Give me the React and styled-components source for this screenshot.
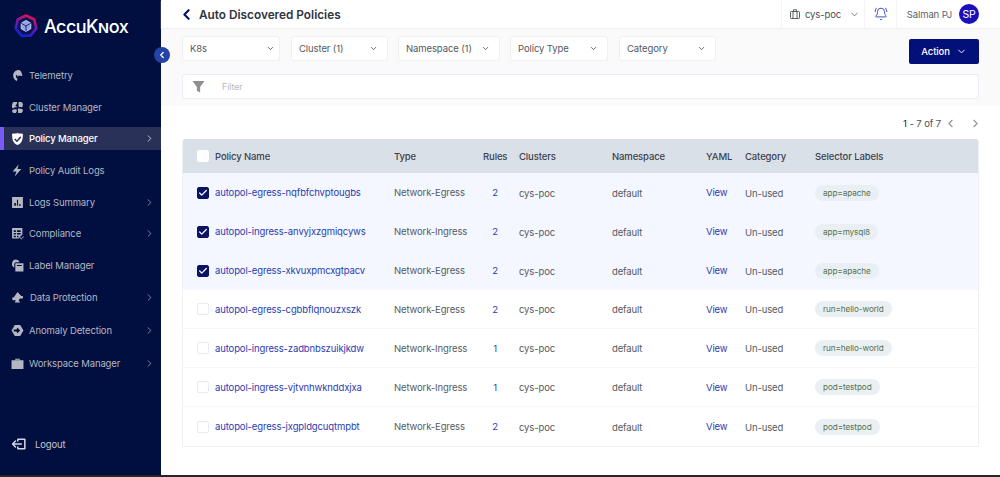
import React from 'react';
import styled, { createGlobalStyle } from 'styled-components';
import { ChevronDown, ChevronLeft, ChevronRight, Check, BellRing } from 'lucide-react';

const GlobalStyle = createGlobalStyle`
  html, body {
    margin: 0;
    padding: 0;
    height: 477px;
    overflow: hidden;
    background: #fff;
    font-family: Inter, "Liberation Sans", sans-serif;
  }
  * { box-sizing: border-box; }
`;

const Page = styled.div`
  display: grid;
  grid-template-rows: 475px 2px;
  width: 1000px;
  height: 477px;
`;

const Strip = styled.div`
  background: #26262b;
`;

const Shell = styled.div`
  display: grid;
  grid-template-columns: 161px 1fr;
  position: relative;
  min-height: 0;
`;

const Sidebar = styled.aside`
  display: flex;
  flex-direction: column;
  background: #010f40;
  color: #b9bcc8;
  padding-bottom: 25px;
`;

const Logo = styled.div`
  display: flex;
  align-items: center;
  gap: 6px;
  height: 59.5px;
  padding: 0 0 7px 14px;
`;

const LogoText = styled.span`
  color: #fff;
  font-size: 18px;
  font-weight: 500;
  font-variant: small-caps;
  letter-spacing: -0.55px;
`;

const Nav = styled.nav`
  display: flex;
  flex-direction: column;
`;

const NavItem = styled.div`
  display: flex;
  align-items: center;
  height: 23px;
  margin: ${p => (p.$tall ? '5px' : '4.35px')} 0;
  padding: 0 6px 0 ${p => (p.$active ? '7px' : '11px')};
  border-left: ${p => (p.$active ? '4px solid #7a5cf5' : 'none')};
  background: ${p => (p.$active ? '#2a3159' : 'transparent')};
  color: ${p => (p.$active ? '#fff' : '#b4b7c2')};
  font-size: 9.5px;
  letter-spacing: -0.12px;
  font-weight: ${p => (p.$active ? 500 : 400)};
`;

const NavIcon = styled.svg`
  width: 13px;
  height: 13px;
  margin-right: 5px;
  flex: none;
  fill: ${p => (p.$active ? '#fff' : '#b4b7c2')};
`;

const NavLabel = styled.span`
  flex: 1;
  padding-left: ${p => (p.$shift ? '1px' : '0')};
`;

const Logout = styled.div`
  display: flex;
  align-items: center;
  gap: 9px;
  margin-top: auto;
  padding-left: 12px;
  font-size: 9.5px;
  letter-spacing: -0.12px;
  color: #c3c6d0;
`;

const Collapse = styled.button`
  position: absolute;
  left: 154px;
  top: 47px;
  width: 16px;
  height: 16px;
  border: 0;
  border-radius: 50%;
  padding: 0;
  display: flex;
  align-items: center;
  justify-content: center;
  background: #2443a6;
  color: #fff;
`;

const Main = styled.main`
  display: flex;
  flex-direction: column;
  min-width: 0;
`;

const Header = styled.header`
  display: flex;
  align-items: stretch;
  height: 28px;
  padding: 0 21px;
  box-shadow: 0 1px 1px #f0f0f0;
  position: relative;
`;

const Back = styled.span`
  display: flex;
  align-items: center;
  color: #0a1466;
  margin-left: -4px;
  width: 21px;
`;

const Title = styled.h1`
  flex: 1;
  margin: 1px 0 0;
  align-self: center;
  font-size: 11.8px;
  font-weight: 600;
  color: #2f3440;
`;

const WorkspaceCell = styled.div`
  display: flex;
  align-items: center;
  width: 83px;
  padding-left: 8px;
  border-left: 1px solid #f4f4f4;
  font-size: 9.5px;
  letter-spacing: -0.12px;
  color: #4b4f58;
`;

const WorkspaceName = styled.span`
  margin: 0 8px 0 5px;
`;

const BellCell = styled.div`
  display: flex;
  align-items: center;
  justify-content: center;
  width: 33px;
  border-left: 1px solid #f4f4f4;
  border-right: 1px solid #f4f4f4;
  color: #2a3cb0;
`;

const UserBox = styled.div`
  display: flex;
  align-items: center;
  justify-content: flex-end;
  gap: 7px;
  width: 82px;
  font-size: 9.5px;
  letter-spacing: -0.12px;
  color: #5b5f68;
`;

const Avatar = styled.span`
  display: flex;
  align-items: center;
  justify-content: center;
  width: 20px;
  height: 20px;
  border-radius: 50%;
  background: #1a0fb8;
  color: #fff;
  font-size: 10.5px;
`;

const FilterPanel = styled.section`
  display: flex;
  flex-direction: column;
  gap: 10px;
  height: 78px;
  padding: 8px 21px 0;
  background: #fafafa;
`;

const FilterRow = styled.div`
  display: flex;
  align-items: flex-start;
`;

const Select = styled.div`
  display: flex;
  align-items: center;
  justify-content: space-between;
  width: ${p => p.$width}px;
  height: 25px;
  margin-right: ${p => p.$gap}px;
  padding: 0 ${p => p.$pad}px 0 7px;
  background: #fff;
  border: 1px solid #f0f0f4;
  border-radius: 3px;
  font-size: 9.5px;
  letter-spacing: -0.1px;
  color: #55585f;
`;

const ActionButton = styled.button`
  display: flex;
  align-items: center;
  justify-content: center;
  gap: 6px;
  width: 70px;
  height: 25px;
  margin: 3px 0 0 auto;
  border: 0;
  border-radius: 2px;
  background: #04107a;
  color: #fff;
  font-family: inherit;
  font-size: 9.5px;
  letter-spacing: -0.1px;
  font-weight: 500;
`;

const FilterBar = styled.div`
  display: flex;
  align-items: center;
  height: 25px;
  padding-left: 9px;
  background: #fff;
  border: 1px solid #ececf8;
  border-radius: 3px;
  font-size: 8.7px;
  color: #b5b9c4;
`;

const FilterIcon = styled.svg`
  width: 13px;
  height: 13px;
  fill: #8f8f8f;
  margin-right: 17px;
`;

const Pager = styled.div`
  display: flex;
  align-items: center;
  justify-content: flex-end;
  height: 33px;
  padding: 2px 18px 0 0;
  font-size: 9.5px;
  letter-spacing: -0.1px;
  color: #4b4f58;
`;

const PagerFirst = styled.span`
  color: #0a1466;
`;

const PagerButton = styled.span`
  display: flex;
  color: #8f939b;
  margin-left: ${p => p.$gap}px;
`;

const Table = styled.div`
  margin: 0 21px 0;
  border: 1px solid #eef0f3;
  border-top: 0;
  border-radius: 3px 3px 0 0;
  overflow: hidden;
`;

const columns = '32px 179px 89px 36px 93px 94px 39px 70px 1fr';

const HeadRow = styled.div`
  display: grid;
  grid-template-columns: ${columns};
  align-items: center;
  height: 34px;
  background: #dae0e7;
  font-size: 9.5px;
  letter-spacing: -0.12px;
  font-weight: 500;
  color: #3d424d;
`;

const Row = styled.div`
  display: grid;
  grid-template-columns: ${columns};
  align-items: center;
  height: 39px;
  background: ${p => (p.$selected ? '#f4f7ff' : '#fff')};
  border-bottom: ${p => (p.$selected || p.$last ? '0' : '1px solid #f7f7f9')};
  font-size: 9.5px;
  letter-spacing: -0.13px;
  color: #565a62;
`;

const Cell = styled.div`
  white-space: nowrap;
  margin-top: ${p => (p.$low ? '1px' : '0')};
`;

const BoxCell = styled.div`
  display: flex;
  justify-content: flex-end;
  padding-right: 6px;
`;

const CheckBox = styled.span`
  display: flex;
  align-items: center;
  justify-content: center;
  width: 12px;
  height: 12px;
  border-radius: 2px;
  color: #fff;
  background: ${p => (p.$checked ? '#0a1466' : '#fff')};
  border: 1px solid ${p => (p.$checked ? '#0a1466' : p.$plain ? '#fff' : '#e8eaf6')};
`;

const PolicyLink = styled.a`
  color: #2a3cb0;
`;

const RuleCount = styled.div`
  width: 24px;
  text-align: center;
  color: #2a3cb0;
`;

const ViewLink = styled.a`
  color: #2a3cb0;
`;

const Pill = styled.span`
  display: inline-flex;
  align-items: center;
  height: 16px;
  padding: 0 8px;
  border-radius: 8px;
  background: #e9eff3;
  color: #56724f;
  font-size: 8.2px;
  letter-spacing: -0.1px;
`;

const Svg = ({ children, active }) => (
  <NavIcon viewBox="0 0 24 24" $active={active}>{children}</NavIcon>
);

const icons = {
  telemetry: <path d="M14 2c-5 0-10 4-10 10 0 5 3 9 7 10l1-4c-2-1-3-3-3-5 0-1 1-2 2-2l1 3c1 0 2-1 2-2l6 1c1-1 1-3 0-4 0-3-3-7-6-7z" />,
  cluster: <path d="M5 2h6c1 3-1 5-3 6 1 1 3 2 3 4-3-1-5 0-7 2-2-1-3-3-2-6 0-3 1-5 3-6zm9 0h5c2 1 3 3 3 5 0 2-1 4-2 5-2-1-4-1-6 0 1-3-1-7 0-10zM2 17c3-2 6-2 9-1 0 2-1 4-2 6H5c-2 0-3-3-3-5zm11-3c3 0 6 0 9 2 0 3-1 6-4 6h-5c1-2-1-6 0-8z" />,
  shield: <path fillRule="evenodd" d="M2 3c7 0 10 0 10-2 0 2 3 2 10 2 0 10-1 17-10 21C3 20 2 13 2 3zm15 5l-6 7-3-3-2 2 5 5 8-9z" />,
  bolt: <path d="M14 1L3 14h7l-3 9 12-14h-7z" />,
  chart: <path fillRule="evenodd" d="M2 2h20v20H2zm4 11v5h3v-5zm5-6v11h2V7zm4 8v3h3v-3z" />,
  compliance: <path fillRule="evenodd" d="M2 2h19v12l-7 7H2zm3 4v3h4V6zm6 0v3h7V6zM5 11v3h4v-3zm6 0v3h7v-3zM5 16v3h4v-3zm6 0v3h3v-3zm12 1l1 1-5 5-3-3 1-1 2 2z" />,
  label: <path fillRule="evenodd" d="M9 1a8 8 0 0 1 7 5H9a3 3 0 0 0-3 3v7a8 8 0 0 1 3-15zm-1 7h15v15H8zm3 3v2h9v-2z" />,
  data: <path d="M12 2l7 7h3v5H17l-3 3 3 4H7l2-4H3l-1-5h3z" />,
  anomaly: <path fillRule="evenodd" d="M7 2h10l6 10-6 10H7L1 12zm5 5l-2 3H5v4h5l2 3 5-5z" />,
  work: <path d="M8 6V3h8v3h7v16H1V6zm2 0h4V5h-4z" />
};

const items = [
  { label: 'Telemetry', icon: 'telemetry' },
  { label: 'Cluster Manager', icon: 'cluster' },
  { label: 'Policy Manager', icon: 'shield', active: true, more: true },
  { label: 'Policy Audit Logs', icon: 'bolt' },
  { label: 'Logs Summary', icon: 'chart', more: true },
  { label: 'Compliance', icon: 'compliance', more: true },
  { label: 'Label Manager', icon: 'label' },
  { label: 'Data Protection', icon: 'data', more: true, tall: true, shift: true },
  { label: 'Anomaly Detection', icon: 'anomaly', more: true, tall: true },
  { label: 'Workspace Manager', icon: 'work', more: true }
];

const filters = [
  { label: 'K8s', width: 98, gap: 11, pad: 4 },
  { label: 'Cluster (1)', width: 97, gap: 10, pad: 9 },
  { label: 'Namespace (1)', width: 102, gap: 10, pad: 9 },
  { label: 'Policy Type', width: 98, gap: 11, pad: 9 },
  { label: 'Category', width: 97, gap: 0, pad: 9 }
];

const policies = [
  { name: 'autopol-egress-nqfbfchvptougbs', type: 'Network-Egress', rules: 2, label: 'app=apache', selected: true },
  { name: 'autopol-ingress-anvyjxzgmiqcyws', type: 'Network-Ingress', rules: 2, label: 'app=mysql8', selected: true },
  { name: 'autopol-egress-xkvuxpmcxgtpacv', type: 'Network-Egress', rules: 2, label: 'app=apache', selected: true },
  { name: 'autopol-egress-cgbbflqnouzxszk', type: 'Network-Egress', rules: 2, label: 'run=hello-world' },
  { name: 'autopol-ingress-zadbnbszuikjkdw', type: 'Network-Ingress', rules: 1, label: 'run=hello-world' },
  { name: 'autopol-ingress-vjtvnhwknddxjxa', type: 'Network-Ingress', rules: 1, label: 'pod=testpod' },
  { name: 'autopol-egress-jxgpldgcuqtmpbt', type: 'Network-Egress', rules: 2, label: 'pod=testpod' }
];

const LogoMark = () => (
  <svg width="24" height="24" viewBox="0 0 24 24">
    <defs>
      <linearGradient id="ring" x1="0.7" y1="0" x2="0.3" y2="1">
        <stop offset="0" stopColor="#e0124f" />
        <stop offset="0.5" stopColor="#6a1ab8" />
        <stop offset="1" stopColor="#0b22d8" />
      </linearGradient>
    </defs>
    <path d="M12 1.500l8.300 4 2 9-5.700 7.200H7.400L1.700 14.500l2-9z" fill="#0b1650" stroke="url(#ring)" strokeWidth="2.600" strokeLinejoin="round" />
    <path d="M12 6.500l4.800 2.700v5.500L12 17.500l-4.800-2.800V9.200z" fill="#8fa4e8" stroke="#dfe6ff" strokeWidth="0.800" />
    <path d="M7.200 9.200L12 12l4.800-2.800M12 12v5.500" fill="none" stroke="#1b2c78" strokeWidth="1" />
  </svg>
);

const LogoutIcon = () => (
  <svg width="14" height="12" viewBox="0 0 24 20" fill="none" stroke="#d5d7df" strokeWidth="2.600" strokeLinecap="round" strokeLinejoin="round">
    <path d="M10 5V2h12v16H10v-3" />
    <path d="M16 10H2M6 5l-5 5 5 5" />
  </svg>
);

const SuitcaseIcon = () => (
  <svg width="10" height="10" viewBox="0 0 20 20" fill="none" stroke="#4b4f58" strokeWidth="1.800">
    <rect x="1" y="5" width="18" height="14" rx="1.500" />
    <path d="M7 5V1.500h6V5M6 5v14M14 5v14" />
  </svg>
);

const Funnel = () => (
  <FilterIcon viewBox="0 0 24 24">
    <path d="M1 2h22l-8 11v10l-6-3v-7z" />
  </FilterIcon>
);

export default function App() {
  return (
    <Page>
      <GlobalStyle />
      <Shell>
        <Sidebar>
          <Logo>
            <LogoMark />
            <LogoText>AccuKnox</LogoText>
          </Logo>
          <Nav>
            {items.map(item => (
              <NavItem key={item.label} $active={item.active} $tall={item.tall}>
                <Svg active={item.active}>{icons[item.icon]}</Svg>
                <NavLabel $shift={item.shift}>{item.label}</NavLabel>
                {item.more && <ChevronRight size={11} strokeWidth={1.5} />}
              </NavItem>
            ))}
          </Nav>
          <Logout>
            <LogoutIcon />
            Logout
          </Logout>
        </Sidebar>
        <Collapse aria-label="Collapse">
          <ChevronLeft size={10} strokeWidth={3} />
        </Collapse>
        <Main>
          <Header>
            <Back><ChevronLeft size={17} strokeWidth={3} /></Back>
            <Title>Auto Discovered Policies</Title>
            <WorkspaceCell>
              <SuitcaseIcon />
              <WorkspaceName>cys-poc</WorkspaceName>
              <ChevronDown size={11} strokeWidth={1.6} />
            </WorkspaceCell>
            <BellCell>
              <BellRing size={14} strokeWidth={1.5} />
            </BellCell>
            <UserBox>
              Salman PJ
              <Avatar>SP</Avatar>
            </UserBox>
          </Header>
          <FilterPanel>
            <FilterRow>
              {filters.map(f => (
                <Select key={f.label} $width={f.width} $gap={f.gap} $pad={f.pad}>
                  {f.label}
                  <ChevronDown size={9} strokeWidth={2.4} />
                </Select>
              ))}
              <ActionButton>
                Action
                <ChevronDown size={11} strokeWidth={2} />
              </ActionButton>
            </FilterRow>
            <FilterBar>
              <Funnel />
              Filter
            </FilterBar>
          </FilterPanel>
          <Pager>
            <PagerFirst>1</PagerFirst>&nbsp;- 7 of 7
            <PagerButton $gap={3}><ChevronLeft size={13} /></PagerButton>
            <PagerButton $gap={12}><ChevronRight size={13} /></PagerButton>
          </Pager>
          <Table>
            <HeadRow>
              <BoxCell><CheckBox $plain /></BoxCell>
              <Cell>Policy Name</Cell>
              <Cell>Type</Cell>
              <Cell>Rules</Cell>
              <Cell>Clusters</Cell>
              <Cell>Namespace</Cell>
              <Cell>YAML</Cell>
              <Cell>Category</Cell>
              <Cell>Selector Labels</Cell>
            </HeadRow>
            {policies.map((p, i) => (
              <Row key={p.name} $selected={p.selected} $last={i === policies.length - 1}>
                <BoxCell>
                  <CheckBox $checked={p.selected}>
                    {p.selected && <Check size={10} strokeWidth={3} />}
                  </CheckBox>
                </BoxCell>
                <Cell><PolicyLink>{p.name}</PolicyLink></Cell>
                <Cell>{p.type}</Cell>
                <RuleCount>{p.rules}</RuleCount>
                <Cell $low>cys-poc</Cell>
                <Cell $low>default</Cell>
                <Cell><ViewLink>View</ViewLink></Cell>
                <Cell $low>Un-used</Cell>
                <Cell><Pill>{p.label}</Pill></Cell>
              </Row>
            ))}
          </Table>
        </Main>
      </Shell>
      <Strip />
    </Page>
  );
}
